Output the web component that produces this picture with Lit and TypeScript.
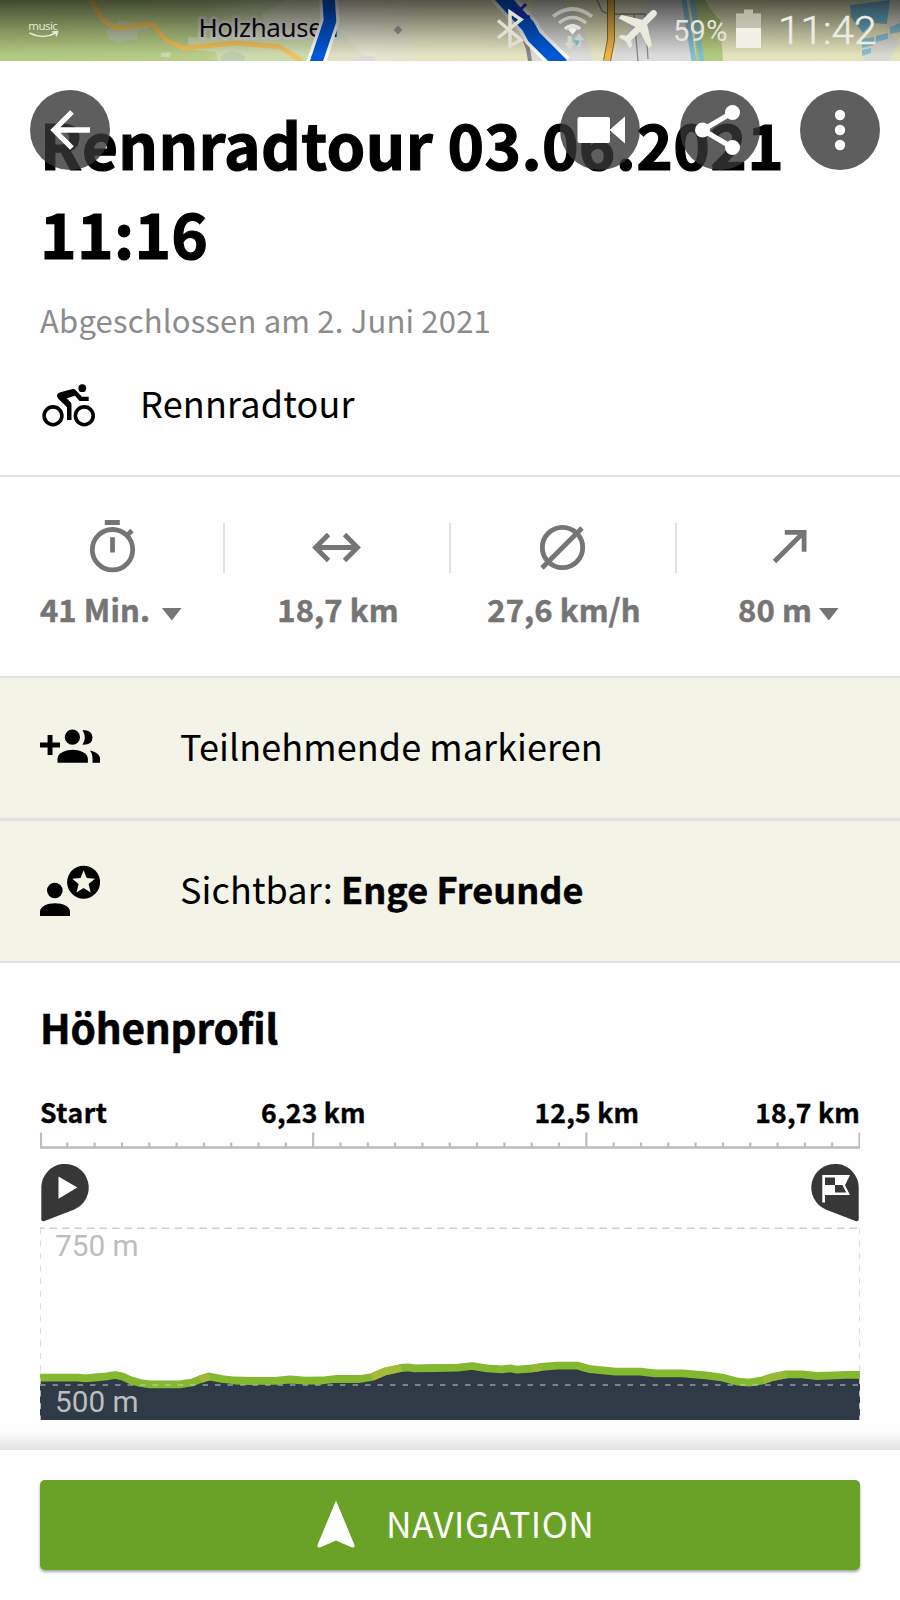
import { LitElement, html, css, svg } from "lit";
import { customElement } from "lit/decorators.js";

type Pt = [number, number];

/** Elevation line, one point per sampled position. */
const PROFILE: Pt[] = [
  [40, 1377.7], [78, 1377.7], [85, 1378.3], [95, 1377.5], [107, 1376.3], [115, 1375], [122, 1376.3], [130, 1380],
  [140, 1383], [150, 1384.3], [180, 1384.3], [192, 1382.5], [200, 1379.3], [209, 1376.5], [222, 1379], [235, 1380.5],
  [250, 1381], [275, 1380.8], [290, 1379.5], [305, 1380.7], [322, 1380.5], [335, 1379], [360, 1379], [372, 1377],
  [385, 1371.5], [401, 1368], [408, 1367.3], [415, 1368.3], [435, 1368], [458, 1367.7], [472, 1366], [487, 1368.3],
  [502, 1369.3], [510, 1368.3], [517, 1369.7], [532, 1368.5], [542, 1366.9], [557, 1365.7], [578, 1365.7],
  [590, 1369.2], [615, 1371.7], [640, 1371.7], [655, 1373.3], [682, 1373.3], [706, 1375.3], [722, 1377.5],
  [738, 1381.7], [749, 1382.7], [763, 1380.3], [770, 1377.8], [778, 1376], [787, 1374.3], [802, 1374.3], [817, 1376],
  [835, 1375.3], [845, 1374.8], [860, 1374.8],
];
/** Steeper stretches: from x, to x, colour. */
const STEEP: [number, number, string][] = [
  [200, 209, "#a0b83a"], [372, 401, "#a5bb38"], [532, 542, "#94b833"], [763, 787, "#99b837"],
];
const pts = (p: Pt[]) => p.map((q) => q.join(",")).join(" ");

@customElement("status-bar")
class StatusBar extends LitElement {
  static styles = css`
    :host { display: block; height: 61px; }
    svg { display: block; }
    .place { font: 26px "Noto Sans", sans-serif; fill: #0c0c0c; stroke: rgba(225, 222, 225, 0.75); stroke-width: 6px; stroke-linejoin: round; paint-order: stroke; }
    .music { font: 11.5px "Open Sans", sans-serif; fill: #e6ead9; }
    .clock { font: 300 38.5px Roboto, sans-serif; fill: #ecece2; stroke: #ecece2; stroke-width: 0.5px; }
    .pct { font: 29px Roboto, sans-serif; fill: #e4e4d8; }
  `;
  render() {
    return html`<svg width="900" height="61" viewBox="0 0 900 61">
      <defs>
        <linearGradient id="shade" x1="0" y1="0" x2="0" y2="1">
          <stop offset="0" stop-color="#000" stop-opacity=".64" />
          <stop offset=".5" stop-color="#000" stop-opacity=".27" />
          <stop offset=".9" stop-color="#000" stop-opacity=".01" />
          <stop offset="1" stop-color="#000" stop-opacity="0" />
        </linearGradient>
        <linearGradient id="land" x1="0" y1="0" x2="1" y2="0">
          <stop offset="0" stop-color="#b3ca80" />
          <stop offset=".22" stop-color="#b8cd88" />
          <stop offset=".28" stop-color="#ccd9aa" />
          <stop offset=".34" stop-color="#d6dfb8" />
          <stop offset=".39" stop-color="#ecebd8" />
          <stop offset=".46" stop-color="#e6e6c4" />
          <stop offset="1" stop-color="#e4e4bc" />
        </linearGradient>
      </defs>
      <rect width="900" height="61" fill="url(#land)" />
      <path d="M188 37l70 3 62-16 18 5 30 32H218l-2-9-28-3z" fill="#cddbad" />
      <path d="M262 14L285 0h105l15 10 12 51h-90l-18-30-45-10z" fill="#e4e4cf" opacity=".75" />
      <path d="M106 30l14-9 20 2 10 5-12 3-1 8-21 3-8-4z" fill="#c2cfad" />
      <path d="M161 53l10-1-1 5-9 0z" fill="#ced9b8" />
      <ellipse cx="233" cy="58" rx="12" ry="6" fill="#c0ceb0" />
      <path d="M353 59l8-3 14 0-1 5h-21z" fill="#dddcdc" />
      <path d="M398 25.500l4.500 4.500-4.500 4.500-4.500-4.500z" fill="#a0a0a0" />
      <path d="M528 61l4-13-6-14 9-34h28l22 30 8 31z" fill="#dddddb" />
      <path d="M610 61l20-35 20-26h34l12 61z" fill="#dcdcdc" />
      <path d="M693 0h12q8 14 15 20l3 41h-27z" fill="#b5cb80" />
      <path d="M684 0l10 61M692 0l10 61" stroke="#85c0d0" stroke-width="5" fill="none" />
      <path d="M850 5l48-6 2 26-28-2-9 10-12-16z" fill="#72b6cf" />
      <path d="M890 0h10v30h-14z" fill="#dcdcd0" />
      <path d="M862 40l28-6 10 8-12 19h-24z" fill="#dadad5" />
      <path d="M862 39l12-2v8l-12 3zM862 50l9-2v5l-9 3zM876 36l12-3v6l-12 3zM890 27l10-4v9l-10 2z" fill="#8bc2d3" />
      <path d="M597 0l5 11 6 3h37l3 45M634 14l4 47" stroke="#888" stroke-width="1.300" fill="none" />
      <path d="M524 37l4 12 2 12" stroke="#888" stroke-width="4" fill="none" />
      <path d="M91 0l10 17 6 6 11 5 34-4 15 17 17 7 53-5 43 4 22 14" stroke="#f2c35e" stroke-width="5" fill="none" />
      <path d="M611 0v40l-4 21" stroke="#8a6c2a" stroke-width="8" fill="none" />
      <path d="M611 0v40l-4 21" stroke="#f0b648" stroke-width="6" fill="none" />
      <text class="place" x="198.500" y="36.500" textLength="140">Holzhausen</text>
      <path d="M328.500-3l1.500 24-14.500 43" stroke="#fff" stroke-width="19" fill="none" />
      <path d="M328.500-3l1.500 24-14.500 43" stroke="#0058d8" stroke-width="12.500" fill="none" />
      <path d="M499-6l29 32 6 11 28 28" stroke="#fff" stroke-width="21" fill="none" />
      <path d="M499-6l29 32 6 11 28 28" stroke="#0058d8" stroke-width="14" fill="none" />
      <path d="M511 6l18 12M512 15l18 2M526 4l-12 12" stroke="#2433d0" stroke-width="3" fill="none" />
      <rect width="900" height="61" fill="url(#shade)" />
      <text class="music" x="28.300" y="29.500" textLength="29.500">music</text>
      <path d="M29.500 33q13 7 26.500 0M52 32l5.500-.3-1.300 4.600" stroke="#e6ead9" stroke-width="1.700" fill="none" />
      <path d="M498 20.500l23 19.500-11 6V12l11 7.500-23 18.500" stroke="#dfe0d2" stroke-width="3.500" fill="none" />
      <g fill="none" stroke="#e4e4d8">
        <path d="M553 16.500q19.500-15 39 0" stroke-width="3.800" opacity=".5" />
        <path d="M559 23q13.500-11 27 0" stroke-width="3.500" opacity=".6" />
        <path d="M565 29q7.500-6.500 15 0" stroke-width="3.600" />
      </g>
      <path d="M568 29.500q4.500-4 9 0l-4.500 5z" fill="#f2f2ea" />
      <path d="M567.500 36h4v7h3l-5 7-5-7h3z" fill="#dcdcd0" opacity=".8" />
      <path d="M579 33l5 7h-3v7h-4.500v-7h-3z" fill="#d2d7cf" opacity=".7" />
      <path d="M573 39l7 2-3 5z" fill="#6fb5cf" />
      <g transform="translate(640 27) rotate(45) scale(2.250) translate(-11.500 -12)">
        <path d="M21 16v-2l-8-5V3.500c0-.83-.67-1.500-1.500-1.500S10 2.670 10 3.500V9l-8 5v2l8-2.500V19l-2 1.500V22l3.500-1 3.500 1v-1.500L13 19v-5.500l8 2.500z" fill="#e9e9de" />
      </g>
      <text class="pct" x="673" y="41" textLength="54.500" lengthAdjust="spacingAndGlyphs">59%</text>
      <path d="M744 9.500h9v4h8v14.500h-25V13.500h8z" fill="#cfcfc2" opacity=".75" />
      <path d="M736 28h25v20h-25z" fill="#f0f0e6" />
      <text class="clock" x="778" y="44" textLength="98.500" lengthAdjust="spacingAndGlyphs">11:42</text>
    </svg>`;
  }
}

@customElement("elevation-chart")
class ElevationChart extends LitElement {
  static styles = css`
    :host { display: block; }
    svg { display: block; }
    .km { font: 700 26.5px "Noto Sans CJK SC", sans-serif; fill: #000; stroke: #000; stroke-width: 0.4px; }
    .alt { font: 29px Roboto, sans-serif; fill: #bdbdbd; }
  `;
  render() {
    const ticks = Array.from({ length: 31 }, (_, i) => i);
    return html`<svg width="820" height="330" viewBox="40 1090 820 330">
      <text class="km" x="40" y="1122.700" textLength="67">Start</text>
      <text class="km" x="313.300" y="1122.700" text-anchor="middle" textLength="104.500">6,23 km</text>
      <text class="km" x="586.700" y="1122.700" text-anchor="middle" textLength="104.500">12,5 km</text>
      <text class="km" x="859.700" y="1122.700" text-anchor="end" textLength="104.500">18,7 km</text>
      ${ticks.map((i) => {
        const x = 40 + (i * 819.5) / 30 + (i === 0 ? 1 : 0);
        return svg`<path d=${`M${x} ${i % 10 ? 1142.5 : 1132.5}V1148`} stroke="#bdbdbd" stroke-width="2.200" />`;
      })}
      <path d="M40 1147.500H860" stroke="#bdbdbd" stroke-width="2.400" />
      <path d="M41.300 1187a23.700 23.700 0 1 1 33 22.400L44.500 1221q-3.200.9-3.200-2z" fill="#373737" />
      <path d="M58.500 1176.500v22.300l18.800-11.200z" fill="#fff" />
      <path d="M858.700 1187a23.700 23.700 0 1 0-33 22.400L855.500 1221q3.200.9 3.200-2z" fill="#373737" />
      <path d="M822.300 1175h27.700l-5 10.200 5 9.800h-25v7.500h-2.700z" fill="#fff" />
      <path d="M825 1177.500h10v7.500h-10zM835 1185h7.500l3.700 7.500H835z" fill="#373737" />
      <polygon points=${`40,1420 ${pts(PROFILE)} 860,1420`} fill="#2f3a46" />
      <polyline points=${pts(PROFILE)} fill="none" stroke="#83b82f" stroke-width="7.800" stroke-linejoin="round" />
      ${STEEP.map(
        ([a, b, c]) =>
          svg`<polyline points=${pts(PROFILE.filter(([x]) => x >= a && x <= b))} fill="none" stroke=${c} stroke-width="7.600" stroke-linejoin="round" />`,
      )}
      <g fill="none" stroke-dasharray="6 6.500">
        <path d="M40 1228.300H860" stroke="#cfcfcf" stroke-width="1.400" stroke-dasharray="7.500 5" stroke-dashoffset="3" />
        <path d="M40.500 1228V1420" stroke="#d3d5d6" stroke-width="1" stroke-opacity=".8" />
        <path d="M859.500 1228V1420" stroke="#d3d5d6" stroke-width="1" stroke-opacity=".8" />
        <path d="M40 1385H860" stroke="#c8cbce" stroke-opacity=".5" stroke-width="1.800" stroke-dasharray="5.500 7" />
      </g>
      <text class="alt" x="55" y="1255.500" textLength="83.500" lengthAdjust="spacingAndGlyphs">750 m</text>
      <text class="alt" x="55" y="1412.200" textLength="83.500" lengthAdjust="spacingAndGlyphs">500 m</text>
    </svg>`;
  }
}

@customElement("app-root")
class AppRoot extends LitElement {
  static styles = css`
    :host { display: flex; flex-direction: column; position: relative; width: 900px; height: 1600px; overflow: hidden; background: #fefefe; color: #000; font-family: "Noto Sans CJK SC", sans-serif; }
    * { box-sizing: border-box; }
    svg { display: block; flex: none; }
    .actions { position: absolute; top: 90px; left: 30px; right: 20px; display: flex; gap: 40px; }
    .action { width: 80px; height: 80px; border-radius: 50%; background: rgba(54, 54, 54, 0.8); }
    .action.back { margin-right: auto; }
    .head { height: 416px; padding: 38px 40px 0; border-bottom: 2px solid #e1e1e1; }
    h1 { margin: 0 0 24px; font-size: 62px; line-height: 88.500px; font-weight: 700; white-space: nowrap; letter-spacing: 0.370px; -webkit-text-stroke: 1.200px #000; }
    .date { font-size: 31px; line-height: 40px; color: #8c8c8c; margin-bottom: 36.800px; white-space: nowrap; letter-spacing: 0.190px; }
    .sport { display: flex; align-items: center; height: 50px; font-size: 36px; letter-spacing: 0.180px; }
    .sport svg { margin-right: 40px; }
    .stats { display: grid; grid-template-columns: 225px 226px 226px 223px; height: 201px; border-bottom: 2px solid #e1e1e1; padding-top: 38px; }
    .stat { display: flex; flex-direction: column; align-items: center; position: relative; }
    .bar { position: absolute; right: 0; top: 7.500px; width: 2px; height: 50px; background: #e1e1e1; }
    .value { display: flex; align-items: center; margin-top: 14px; font-size: 31px; line-height: 40px; font-weight: 700; color: #757575; white-space: nowrap; letter-spacing: 0.100px; -webkit-text-stroke: 0.500px #757575; }
    .value svg { margin-top: 11px; }
    .value.timed { margin-right: 3px; }
    .row { display: flex; align-items: center; padding-left: 40px; background: #f4f3e8; font-size: 36px; border-bottom: 2px solid #e1e1e1; height: 142px; white-space: nowrap; letter-spacing: 0.080px; }
    .row.first { height: 143px; border-bottom-width: 3px; }
    .row svg { margin-right: 80px; }
    .row .label { padding-bottom: 7px; }
    .row b { -webkit-text-stroke: 0.500px #000; }
    .elev { flex: 1; padding: 33.500px 40px 0; }
    h2 { margin: 0 0 33.500px; font-size: 40.500px; line-height: 60px; font-weight: 700; letter-spacing: -0.180px; -webkit-text-stroke: 0.600px #000; }
    .fade { height: 20px; margin-top: 10px; background: linear-gradient(#fefefe, #e3e3e3); }
    .foot { height: 150px; padding: 30px 40px 0; }
    .go { display: flex; align-items: center; height: 90px; border-radius: 5px; background: #6aa227; box-shadow: 0 2px 3px rgba(0, 0, 0, 0.35); color: #fff; font-size: 35.300px; letter-spacing: 0.450px; padding-left: 275px; }
    .go svg { margin-right: 29px; }
    .go .label { padding-bottom: 6px; }
  `;

  private caret(gap: number) {
    return html`<svg width=${20 + gap} height="13" viewBox="${-gap} 0 ${20 + gap} 13"><path d="M0 0h19.500L9.750 12.500z" fill="#757575" /></svg>`;
  }

  render() {
    return html`
      <status-bar></status-bar>
      <section class="head">
        <h1>Rennradtour 03.06.2021<br />11:16</h1>
        <div class="date">Abgeschlossen am 2. Juni 2021</div>
        <div class="sport">
          <svg width="60" height="50" viewBox="40 377 60 50" overflow="visible">
            <g fill="none" stroke="#000" stroke-width="3.600"><circle cx="53" cy="415.800" r="8.900" /><circle cx="84.300" cy="415.800" r="8.900" /></g>
            <circle cx="82.300" cy="388.200" r="3.900" />
            <path d="M59.500 392.500L72.500 389q2-.3 3.300 1.200l6.200 6.600h6.700v4.100H79.500L75 395.800l-8.300 2.500 3.600 3.600q1.200 1.200 1.200 3V420H67v-12.700l-8.700-8.500q-3.200-4.300 1.200-6.300z" />
          </svg>
          <span>Rennradtour</span>
        </div>
      </section>
      <section class="stats">
        <div class="stat">
          <svg width="60" height="60" viewBox="81.500 515 60 60"><g fill="none" stroke="#757575" stroke-width="4.800"><circle cx="111" cy="549.700" r="20.200" /><path d="M103.300 522.500h15M111 537.300v15.300M124 537l6.500-6.500" /></g></svg>
          <div class="value timed"><span>41 Min.</span>${this.caret(12)}</div>
          <i class="bar"></i>
        </div>
        <div class="stat">
          <svg width="60" height="60" viewBox="308 515 60 60"><path d="M328.500 534.500l-13 13 13 13M344.500 534.500l13 13-13 13M316 547.500h41" fill="none" stroke="#757575" stroke-width="4.800" /></svg>
          <div class="value"><span>18,7 km</span></div>
          <i class="bar"></i>
        </div>
        <div class="stat">
          <svg width="60" height="60" viewBox="534 515 60 60"><g fill="none" stroke="#757575" stroke-width="4.800"><circle cx="562.500" cy="547.500" r="20.200" /><path d="M542 568l40-40" /></g></svg>
          <div class="value"><span>27,6 km/h</span></div>
          <i class="bar"></i>
        </div>
        <div class="stat">
          <svg width="60" height="60" viewBox="758.500 515 60 60"><path d="M774 561.500l29-29M784.300 532.400h19.300v19.300" fill="none" stroke="#757575" stroke-width="4.800" /></svg>
          <div class="value"><span>80 m</span>${this.caret(7)}</div>
        </div>
      </section>
      <section class="row first">
        <svg width="60" height="60" viewBox="40 719 60 60">
          <path d="M40 743.500h7.600V736h4.900v7.500H60v4.900h-7.500V756h-4.900v-7.600H40z" />
          <circle cx="72.400" cy="738.200" r="7.600" />
          <path d="M57.500 763.700v-4c0-6 9-9 15.200-9s15.200 3 15.200 9v4z" />
          <path d="M82.500 731q10 0 10 7.500t-10 7.200q4.500-7 0-14.700zM90 751.500c5.500 1.200 10 4 10 8v4.200h-7.500v-4c0-3.500-1-6-2.500-8.200z" />
        </svg>
        <span class="label">Teilnehmende markieren</span>
      </section>
      <section class="row">
        <svg width="60" height="60" viewBox="40 861 60 60">
          <circle cx="54.800" cy="890.500" r="7.800" />
          <path d="M40 916v-4.500c0-5 7-8.300 15-8.300s15 3.300 15 8.300v4.500z" />
          <circle cx="83.600" cy="882.200" r="16.500" />
          <path d="M83.600 870.200l3.100 7.900 8.300.6-6.400 5.400 2.100 8.300-7.100-4.500-7.100 4.500 2.100-8.300-6.400-5.400 8.300-.6z" fill="#f4f3e8" />
        </svg>
        <span class="label">Sichtbar: <b>Enge Freunde</b></span>
      </section>
      <section class="elev">
        <h2>Höhenprofil</h2>
        <elevation-chart></elevation-chart>
      </section>
      <div class="fade"></div>
      <footer class="foot">
        <div class="go">
          <svg width="42" height="50" viewBox="315 1500 42 50"><path d="M336 1500.500l18.500 44.500q.6 3-2.300 2.500L336 1540.500l-16.200 7q-2.900.5-2.300-2.500z" fill="#fff" /></svg>
          <span class="label">NAVIGATION</span>
        </div>
      </footer>
      <nav class="actions">
        <div class="action back"><svg width="80" height="80" viewBox="30 90 80 80"><path d="M90 130H54M72 112l-18 18 18 18" fill="none" stroke="#fff" stroke-width="5.300" /></svg></div>
        <div class="action"><svg width="80" height="80" viewBox="560 90 80 80"><path d="M579.500 117H608q2 0 2 2v10.500l15-13v27l-15-13V141q0 2-2 2h-28.500q-2 0-2-2v-22q0-2 2-2z" fill="#fff" /></svg></div>
        <div class="action"><svg width="80" height="80" viewBox="680 90 80 80"><g fill="#fff"><circle cx="702.500" cy="130" r="7.500" /><circle cx="732.500" cy="112.500" r="7.500" /><circle cx="732.500" cy="147.500" r="7.500" /></g><path d="M732.500 112.500l-30 17.500 30 17.500" fill="none" stroke="#fff" stroke-width="5" /></svg></div>
        <div class="action"><svg width="80" height="80" viewBox="800 90 80 80"><g fill="#fff"><circle cx="840" cy="115" r="5.200" /><circle cx="840" cy="130" r="5.200" /><circle cx="840" cy="145" r="5.200" /></g></svg></div>
      </nav>
    `;
  }
}
